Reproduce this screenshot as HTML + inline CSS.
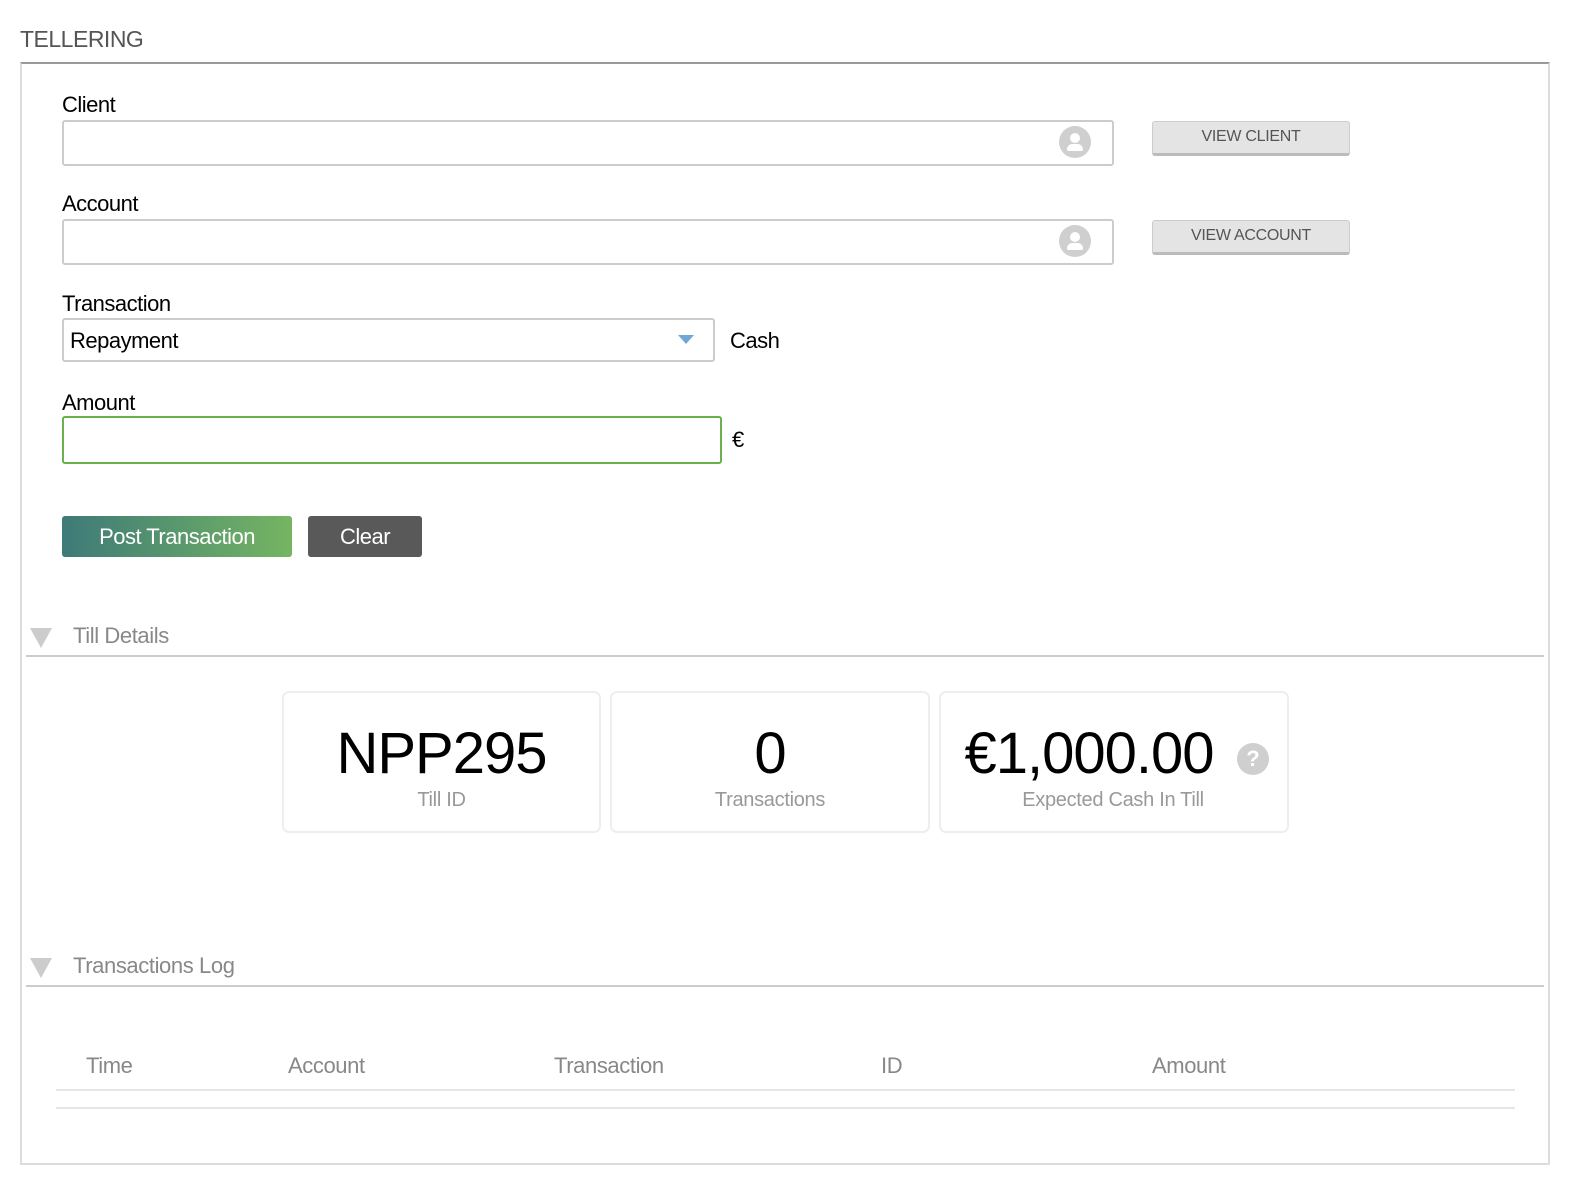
<!DOCTYPE html>
<html><head><meta charset="utf-8"><style>
*{box-sizing:border-box;margin:0;padding:0}
html,body{width:1582px;height:1204px;overflow:hidden}
body{background:#fff;font-family:"Liberation Sans",sans-serif;position:relative;color:#000}
.a{position:absolute;white-space:nowrap}
.lbl{font-size:22px;letter-spacing:-0.5px}
.inp{position:absolute;border:2px solid #ccc;border-radius:3px;background:#fff}
.ico{position:absolute;width:32px;height:32px;border-radius:50%;background:#cfcfcf}
.ico:before{content:"";position:absolute;left:11px;top:7px;width:10px;height:10px;border-radius:50%;background:#fff}
.ico:after{content:"";position:absolute;left:8px;top:18px;width:16px;height:7px;border-radius:7px 7px 2px 2px;background:#fff}
.btn{position:absolute;background:#e4e4e4;border:1px solid #ccc;border-bottom:3px solid #bbb;border-radius:3px;font-size:16px;color:#555;text-align:center;line-height:29px;letter-spacing:-0.3px}
.card{position:absolute;top:691px;height:142px;border:2px solid #eee;border-radius:7px;text-align:center}
.big{position:absolute;left:0;right:0;top:28px;font-size:58px;line-height:66px;letter-spacing:-1px}
.sm{position:absolute;left:0;right:0;top:96px;font-size:20px;color:#999;letter-spacing:-0.3px}
.tri{position:absolute;width:0;height:0;border-left:11px solid transparent;border-right:11px solid transparent;border-top:20px solid #ccc}
.hd{font-size:22px;color:#888;letter-spacing:-0.4px}
.hl{position:absolute;height:2px;background:#ccc}
.th{position:absolute;top:1053px;font-size:22px;color:#888;letter-spacing:-0.4px}
</style></head><body>
<div class="a" style="left:20px;top:26px;font-size:23px;color:#555;letter-spacing:-0.5px">TELLERING</div>
<div class="a" style="left:20px;top:62px;width:1530px;height:1103px;border:2px solid #ddd;border-top:2px solid #999"></div>

<div class="a lbl" style="left:62px;top:92px">Client</div>
<div class="inp" style="left:62px;top:120px;width:1052px;height:46px"></div>
<div class="ico" style="left:1059px;top:126px"></div>
<div class="btn" style="left:1152px;top:121px;width:198px;height:35px">VIEW CLIENT</div>

<div class="a lbl" style="left:62px;top:191px">Account</div>
<div class="inp" style="left:62px;top:219px;width:1052px;height:46px"></div>
<div class="ico" style="left:1059px;top:225px"></div>
<div class="btn" style="left:1152px;top:220px;width:198px;height:35px">VIEW ACCOUNT</div>

<div class="a lbl" style="left:62px;top:291px">Transaction</div>
<div class="inp" style="left:62px;top:318px;width:653px;height:44px"></div>
<div class="a lbl" style="left:70px;top:328px">Repayment</div>
<div class="a" style="left:678px;top:335px;width:0;height:0;border-left:8px solid transparent;border-right:8px solid transparent;border-top:9px solid #6fa8d6"></div>
<div class="a lbl" style="left:730px;top:328px">Cash</div>

<div class="a lbl" style="left:62px;top:390px">Amount</div>
<div class="inp" style="left:62px;top:416px;width:660px;height:48px;border-color:#6ab04c"></div>
<div class="a lbl" style="left:732px;top:427px">€</div>

<div class="a" style="left:62px;top:516px;width:230px;height:41px;border-radius:3px;background:linear-gradient(90deg,#3e7a78,#75b562);color:#fff;font-size:22px;text-align:center;line-height:41px;letter-spacing:-0.5px">Post Transaction</div>
<div class="a" style="left:308px;top:516px;width:114px;height:41px;border-radius:3px;background:#595959;color:#fff;font-size:22px;text-align:center;line-height:41px;letter-spacing:-0.5px">Clear</div>

<div class="tri" style="left:30px;top:628px"></div>
<div class="a hd" style="left:73px;top:623px">Till Details</div>
<div class="hl" style="left:26px;top:655px;width:1518px"></div>

<div class="card" style="left:282px;width:319px"><div class="big">NPP295</div><div class="sm">Till ID</div></div>
<div class="card" style="left:610px;width:320px"><div class="big">0</div><div class="sm">Transactions</div></div>
<div class="card" style="left:939px;width:350px"><div class="big" style="left:-50px">€1,000.00</div><div class="sm" style="left:-2px">Expected Cash In Till</div>
<div class="a" style="left:296px;top:50px;width:32px;height:32px;border-radius:50%;background:#cfcfcf;color:#fff;font-weight:bold;font-size:22px;line-height:32px;text-align:center">?</div></div>

<div class="tri" style="left:30px;top:958px"></div>
<div class="a hd" style="left:73px;top:953px">Transactions Log</div>
<div class="hl" style="left:26px;top:985px;width:1518px"></div>

<div class="th" style="left:86px">Time</div>
<div class="th" style="left:288px">Account</div>
<div class="th" style="left:554px">Transaction</div>
<div class="th" style="left:881px">ID</div>
<div class="th" style="left:1152px">Amount</div>
<div class="hl" style="left:56px;top:1089px;width:1459px;background:#e6e6e6"></div>
<div class="hl" style="left:56px;top:1107px;width:1459px;background:#e6e6e6"></div>
</body></html>
